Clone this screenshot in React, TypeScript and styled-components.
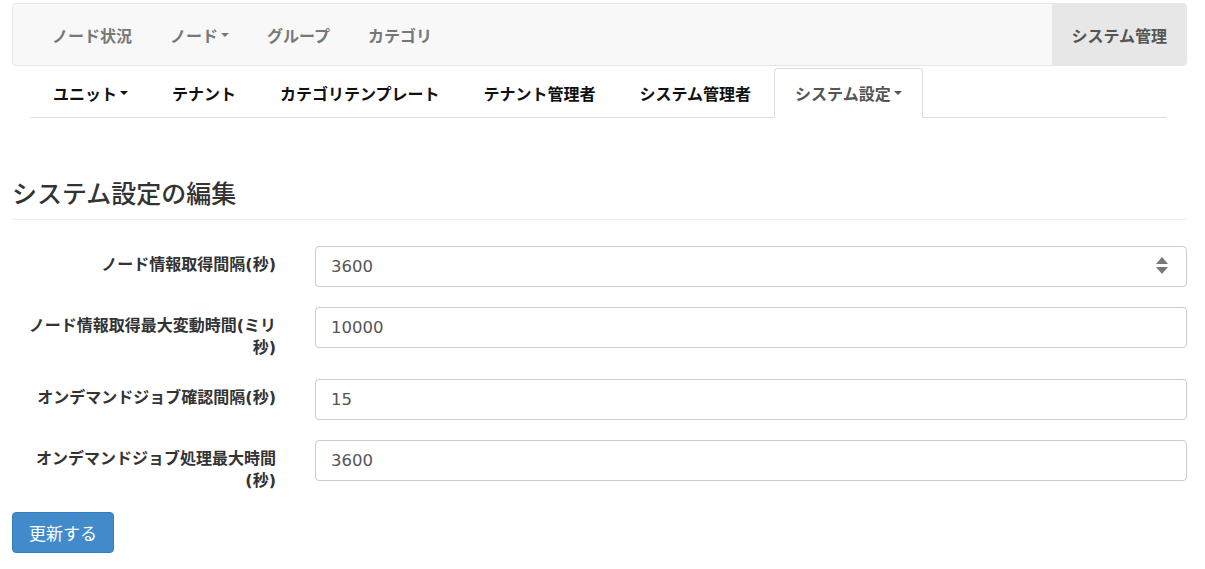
import styled, { createGlobalStyle } from "styled-components";

const GlobalStyle = createGlobalStyle`
  html, body {
    margin: 0;
    padding: 0;
    background: #fff;
  }
  body {
    font-family: "DejaVu Sans", "Noto Sans CJK JP", sans-serif;
    color: #333;
  }
`;

const Page = styled.div`
  padding: 3px 18px 14px 12px;
`;

const NavBar = styled.nav`
  display: flex;
  justify-content: space-between;
  height: 61px;
  background-color: #f8f8f8;
  border: 1px solid #e7e7e7;
  border-radius: 4px;
  overflow: hidden;
`;

const NavGroup = styled.ul`
  display: flex;
  margin: 0;
  padding: 0 0 0 20px;
  list-style: none;
`;

const NavItem = styled.li<{ $active?: boolean }>`
  display: flex;
  align-items: center;
  padding: 0 19px;
  font-family: "Noto Sans CJK JP", sans-serif;
  font-size: 16px;
  font-weight: 700;
  color: ${(p) => (p.$active ? "#555" : "#777")};
  background-color: ${(p) => (p.$active ? "#e7e7e7" : "transparent")};
`;

const Caret = styled.span`
  display: inline-block;
  width: 0;
  height: 0;
  margin-left: 3px;
  border-top: 4px solid currentColor;
  border-left: 4px solid transparent;
  border-right: 4px solid transparent;
`;

const Tabs = styled.ul`
  display: flex;
  margin: 2px 20px 0 19px;
  padding: 0 0 0 1px;
  list-style: none;
  border-bottom: 1px solid #ddd;
`;

const Tab = styled.li<{ $active?: boolean }>`
  display: flex;
  align-items: center;
  height: 48px;
  margin-right: 2px;
  margin-bottom: -1px;
  padding: 0 20px;
  font-family: "Noto Sans CJK JP", sans-serif;
  font-size: 16px;
  font-weight: 700;
  color: ${(p) => (p.$active ? "#555" : "#111")};
  background: ${(p) => (p.$active ? "#fff" : "transparent")};
  border: 1px solid ${(p) => (p.$active ? "#ddd" : "transparent")};
  border-bottom-color: ${(p) => (p.$active ? "#fff" : "transparent")};
  border-radius: 4px 4px 0 0;
`;

const Heading = styled.h2`
  margin: 58px 0 0;
  padding-bottom: 11px;
  font-family: "Noto Sans CJK JP", sans-serif;
  font-size: 25px;
  font-weight: 500;
  line-height: 32px;
  color: #333;
  border-bottom: 1px solid #eee;
`;

const Form = styled.form`
  margin-top: 26px;
`;

const Row = styled.div`
  display: grid;
  grid-template-columns: 264px 1fr;
  column-gap: 39px;
  margin-bottom: 20px;
`;

const Label = styled.label`
  padding: 8px 0 0 14px;
  text-align: right;
  font-family: "DejaVu Sans", "Noto Sans CJK JP", sans-serif;
  font-size: 16px;
  font-weight: 700;
  line-height: 22px;
  color: #333;
`;

const Field = styled.div`
  position: relative;
`;

const Input = styled.input`
  box-sizing: border-box;
  width: 100%;
  height: 41px;
  padding: 0 15px;
  font-family: "DejaVu Sans", sans-serif;
  font-size: 16.5px;
  color: #555;
  background: #fff;
  border: 1px solid #ccc;
  border-radius: 4px;
  outline: none;
`;

const Spinner = styled.span`
  position: absolute;
  right: 19px;
  top: 11px;
  display: flex;
  flex-direction: column;
  gap: 3px;
`;

const Arrow = styled.span<{ $up?: boolean }>`
  width: 0;
  height: 0;
  border-left: 6px solid transparent;
  border-right: 6px solid transparent;
  ${(p) =>
    p.$up ? "border-bottom: 7px solid #777;" : "border-top: 7px solid #777;"}
`;

const SubmitButton = styled.button`
  height: 41px;
  padding: 0 16px;
  font-family: "Noto Sans CJK JP", sans-serif;
  font-size: 17px;
  color: #fff;
  background-color: #428bca;
  border: 1px solid #357ebd;
  border-radius: 4px;
`;

const fields = [
  { label: "ノード情報取得間隔(秒)", value: "3600", spin: true },
  { label: "ノード情報取得最大変動時間(ミリ秒)", value: "10000" },
  { label: "オンデマンドジョブ確認間隔(秒)", value: "15" },
  { label: "オンデマンドジョブ処理最大時間(秒)", value: "3600" },
];

const App = (): JSX.Element => {
  return (
    <>
      <GlobalStyle />
      <Page>
        <NavBar>
          <NavGroup>
            <NavItem>ノード状況</NavItem>
            <NavItem>
              ノード<Caret />
            </NavItem>
            <NavItem>グループ</NavItem>
            <NavItem>カテゴリ</NavItem>
          </NavGroup>
          <NavItem $active>システム管理</NavItem>
        </NavBar>
        <Tabs>
          <Tab>
            ユニット<Caret />
          </Tab>
          <Tab>テナント</Tab>
          <Tab>カテゴリテンプレート</Tab>
          <Tab>テナント管理者</Tab>
          <Tab>システム管理者</Tab>
          <Tab $active>
            システム設定<Caret />
          </Tab>
        </Tabs>
        <Heading>システム設定の編集</Heading>
        <Form onSubmit={(e) => e.preventDefault()}>
          {fields.map((f, i) => (
            <Row key={i}>
              <Label htmlFor={`field-${i}`}>{f.label}</Label>
              <Field>
                <Input id={`field-${i}`} type="text" defaultValue={f.value} />
                {f.spin && (
                  <Spinner>
                    <Arrow $up />
                    <Arrow />
                  </Spinner>
                )}
              </Field>
            </Row>
          ))}
          <SubmitButton type="submit">更新する</SubmitButton>
        </Form>
      </Page>
    </>
  );
};

export default App;
